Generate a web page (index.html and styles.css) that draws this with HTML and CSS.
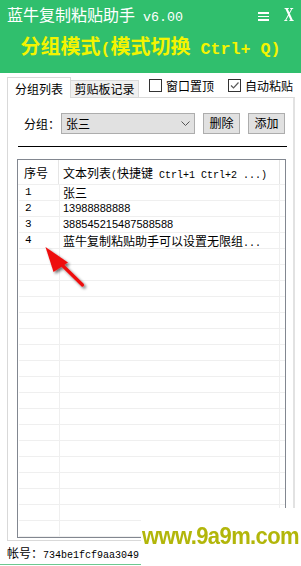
FILE: index.html
```html
<!DOCTYPE html>
<html lang="zh-CN">
<head>
<meta charset="utf-8">
<title>蓝牛复制粘贴助手</title>
<link rel="stylesheet" href="styles.css">
</head>
<body>
<div class="win">
  <header class="titlebar">
    <div class="titlerow">
      <span class="title">蓝牛复制粘贴助手<span class="mono-t"> v6.00</span></span>
      <span class="menu"><i></i><i></i><i></i></span>
      <span class="close">X</span>
    </div>
    <div class="mode">分组模式<span class="mono-m">(</span>模式切换<span class="mono-m"> Ctrl+ Q)</span></div>
  </header>

  <div class="tabbar">
    <div class="tab active">分组列表</div>
    <div class="tab">剪贴板记录</div>
    <label class="chk first"><span class="box"></span>窗口置顶</label>
    <label class="chk"><span class="box"><svg width="11" height="11" viewBox="0 0 11 11"><path d="M2 5.5 L4.5 8 L9.5 2.5" fill="none" stroke="#5a5a5a" stroke-width="1.2"/></svg></span>自动粘贴</label>
  </div>

  <div class="panel">
    <div class="grouprow">
      <span class="lbl">分组：</span>
      <div class="combo"><span>张三</span><svg width="9" height="5" viewBox="0 0 9 5"><path d="M0.5 0.5 L4.5 4.5 L8.5 0.5" fill="none" stroke="#555" stroke-width="1"/></svg></div>
      <button class="btn">删除</button>
      <button class="btn">添加</button>
    </div>
    <div class="rule"></div>
    <div class="list">
      <div class="row head"><div class="c1">序号</div><div class="c2">文本列表<span class="mono">(</span>快捷键<span class="mono"> Ctrl+1 Ctrl+2 ...)</span></div><div class="c3"></div></div>
      <div class="row"><div class="c1 num">1</div><div class="c2">张三</div><div class="c3"></div></div>
      <div class="row"><div class="c1 num">2</div><div class="c2 digits">13988888888</div><div class="c3"></div></div>
      <div class="row"><div class="c1 num">3</div><div class="c2 digits">388545215487588588</div><div class="c3"></div></div>
      <div class="row"><div class="c1 num">4</div><div class="c2">蓝牛复制粘贴助手可以设置无限组<span class="dots">...</span></div><div class="c3"></div></div>
      <div class="row"><div class="c1"></div><div class="c2"></div><div class="c3"></div></div>
      <div class="row"><div class="c1"></div><div class="c2"></div><div class="c3"></div></div>
      <div class="row"><div class="c1"></div><div class="c2"></div><div class="c3"></div></div>
      <div class="row"><div class="c1"></div><div class="c2"></div><div class="c3"></div></div>
      <div class="row"><div class="c1"></div><div class="c2"></div><div class="c3"></div></div>
      <div class="row"><div class="c1"></div><div class="c2"></div><div class="c3"></div></div>
      <div class="row"><div class="c1"></div><div class="c2"></div><div class="c3"></div></div>
      <div class="row"><div class="c1"></div><div class="c2"></div><div class="c3"></div></div>
      <div class="row"><div class="c1"></div><div class="c2"></div><div class="c3"></div></div>
      <div class="row"><div class="c1"></div><div class="c2"></div><div class="c3"></div></div>
      <div class="row"><div class="c1"></div><div class="c2"></div><div class="c3"></div></div>
      <div class="row"><div class="c1"></div><div class="c2"></div><div class="c3"></div></div>
      <div class="row"><div class="c1"></div><div class="c2"></div><div class="c3"></div></div>
      <div class="row"><div class="c1"></div><div class="c2"></div><div class="c3"></div></div>
      <div class="row"><div class="c1"></div><div class="c2"></div><div class="c3"></div></div>
      <div class="row"><div class="c1"></div><div class="c2"></div><div class="c3"></div></div>
      <div class="row"><div class="c1"></div><div class="c2"></div><div class="c3"></div></div>
      <div class="row"><div class="c1"></div><div class="c2"></div><div class="c3"></div></div>
    </div>
  </div>

  <div class="footer">帐号：<span class="mono">734be1fcf9aa3049</span></div>
  <div class="greenline"></div>

  <div class="watermark"><span>www.9a9m.com</span></div>

  <svg class="arrow" width="50" height="50" viewBox="40 242 50 50">
    <defs>
      <filter id="sh" x="-30%" y="-30%" width="160%" height="160%">
        <feGaussianBlur in="SourceAlpha" stdDeviation="1.4"/>
        <feOffset dx="1.5" dy="2" result="b"/>
        <feComponentTransfer><feFuncA type="linear" slope="0.55"/></feComponentTransfer>
        <feMerge><feMergeNode/><feMergeNode in="SourceGraphic"/></feMerge>
      </filter>
    </defs>
    <g filter="url(#sh)">
      <line x1="82.5" y1="285" x2="58" y2="261" stroke="#ee1010" stroke-width="3.2" stroke-linecap="round"/>
      <polygon points="45.5,247 68,262.5 53.5,272" fill="#ee1010"/>
    </g>
  </svg>
</div>
</body>
</html>
```

FILE: styles.css
```css
* { box-sizing: border-box; margin: 0; padding: 0; }
html, body { width: 301px; height: 566px; overflow: hidden; background: #ffffff; }
body {
  font-family: "Noto Sans CJK SC", "Noto Sans", sans-serif;
  font-size: 12px;
  color: #000;
}
.win { position: relative; width: 301px; height: 566px; background: #fff; }

.mono   { font-family: "Liberation Mono", monospace; font-size: 10px; }
.mono-t { font-family: "Liberation Mono", monospace; font-size: 13.33px; }
.mono-m { font-family: "Liberation Mono", monospace; font-size: 16.67px; font-weight: bold; }

/* title bar */
.titlebar {
  height: 73px;
  background: #30bf6d;
  color: #fff;
}
.titlerow {
  display: flex;
  align-items: flex-start;
  height: 35px;
  padding: 6px 0 0 7px;
}
.title { font-size: 16px; line-height: 16px; white-space: nowrap; flex: 1; }
.menu {
  display: flex;
  flex-direction: column;
  gap: 2px;
  width: 11px;
  margin-top: 6px;
  margin-right: 13px;
}
.menu i { display: block; height: 1.5px; background: #fff; }
.close {
  font-family: "Liberation Serif", serif;
  font-weight: bold;
  font-size: 19px;
  line-height: 16px;
  margin-top: 1px;
  margin-right: 5px;
  display: inline-block;
  transform: scaleX(0.72);
}
.mode {
  text-align: center;
  color: #f4f400;
  font-weight: bold;
  font-size: 20px;
  line-height: 20px;
  white-space: nowrap;
  padding-top: 1px;
}

/* tabs */
.tabbar {
  display: flex;
  align-items: flex-end;
  height: 24px;
  padding-left: 7px;
  position: relative;
}
.tab {
  height: 17px;
  padding: 0 3px;
  width: 68px;
  background: #f0f0f0;
  border: 1px solid #d9d9d9;
  border-bottom: none;
  border-left: none;
  line-height: 15px;
  text-align: center;
  white-space: nowrap;
}
.tab.active {
  width: 64px;
  height: 21px;
  background: #fff;
  border-left: 1px solid #d9d9d9;
  line-height: 19px;
  margin-bottom: -1px;
  position: relative;
  z-index: 1;
  padding-top: 1px;
}
.chk {
  display: flex;
  align-items: center;
  align-self: flex-start;
  margin-top: 6px;
  height: 13px;
  gap: 4px;
  white-space: nowrap;
  line-height: 13px;
}
.chk.first { margin-left: 10px; }
.chk + .chk { margin-left: 14px; }
.box {
  width: 13px;
  height: 13px;
  border: 1px solid #333;
  background: #fff;
  display: flex;
  align-items: center;
  justify-content: center;
}

/* panel */
.panel {
  margin-left: 7px;
  width: 288px;
  height: 444px;
  border: 1px solid #d9d9d9;
  border-right: 2px solid #e2e2e2;
  background: #fff;
  padding: 14px 0 0 9px;
}
.grouprow {
  display: flex;
  align-items: center;
  height: 22px;
}
.lbl { width: 37px; padding-left: 7px; box-sizing: content-box; white-space: nowrap; }
.combo {
  width: 134px;
  height: 21px;
  background: #e1e1e1;
  border: 1px solid #adadad;
  display: flex;
  align-items: center;
  justify-content: space-between;
  padding: 0 4px 0 4px;
}
.btn {
  font-family: "Noto Sans CJK SC", sans-serif;
  font-size: 12px;
  color: #000;
  height: 21px;
  width: 37px;
  background: #e1e1e1;
  border: 1px solid #adadad;
  margin-left: 8px;
  line-height: 18px;
}
.btn + .btn { margin-left: 8px; }
.rule {
  height: 1px;
  background: #000;
  width: 269px;
  margin-top: 12px;
  margin-left: 1px;
}
.list {
  margin-top: 12px;
  width: 269px;
  height: 379px;
  border: 1px solid #828790;
  overflow: hidden;
}
.row {
  display: flex;
  height: 16px;
  border-bottom: 1px solid #efefef;
  margin-left: 1px;
}
.row.head { height: 25px; margin-left: 0; }
.c1 { width: 41px; border-right: 1px solid #efefef; padding-left: 6px; white-space: nowrap; line-height: 15px; }
.c2 { width: 220px; border-right: 1px solid #efefef; padding-left: 3px; white-space: nowrap; overflow: hidden; line-height: 15px; }
.c3 { flex: 1; }
.head .c1 { width: 41px; border-right: 1px solid #e5e5e5; padding-left: 6px; line-height: 23px; padding-top: 1px; }
.head .c2 { width: 221px; border-right: 1px solid #e5e5e5; padding-left: 4px; line-height: 23px; padding-top: 1px; }
.num { font-family: "Liberation Mono", monospace; font-size: 11px; }
.digits { font-family: "Liberation Sans", sans-serif; font-size: 11px; }
.dots { font-family: "Liberation Mono", monospace; font-size: 10px; }

/* footer */
.footer {
  padding: 4px 0 0 7px;
  height: 23px;
  line-height: 16px;
  white-space: nowrap;
}
.greenline {
  width: 141px;
  height: 1px;
  background: #6cc890;
}

/* overlays */
.watermark {
  position: absolute;
  left: 141px;
  top: 508px;
  width: 160px;
  height: 58px;
  background: #fff;
}
.watermark span {
  display: inline-block;
  margin-top: 16px;
  margin-left: 1px;
  font-family: "Liberation Sans", Arial, sans-serif;
  font-weight: bold;
  font-size: 22px;
  line-height: 22px;
  letter-spacing: -0.6px;
  color: #b2b60a;
  white-space: nowrap;
  transform: scaleY(1.12);
  transform-origin: left top;
}
.arrow { position: absolute; left: 40px; top: 242px; }
```
